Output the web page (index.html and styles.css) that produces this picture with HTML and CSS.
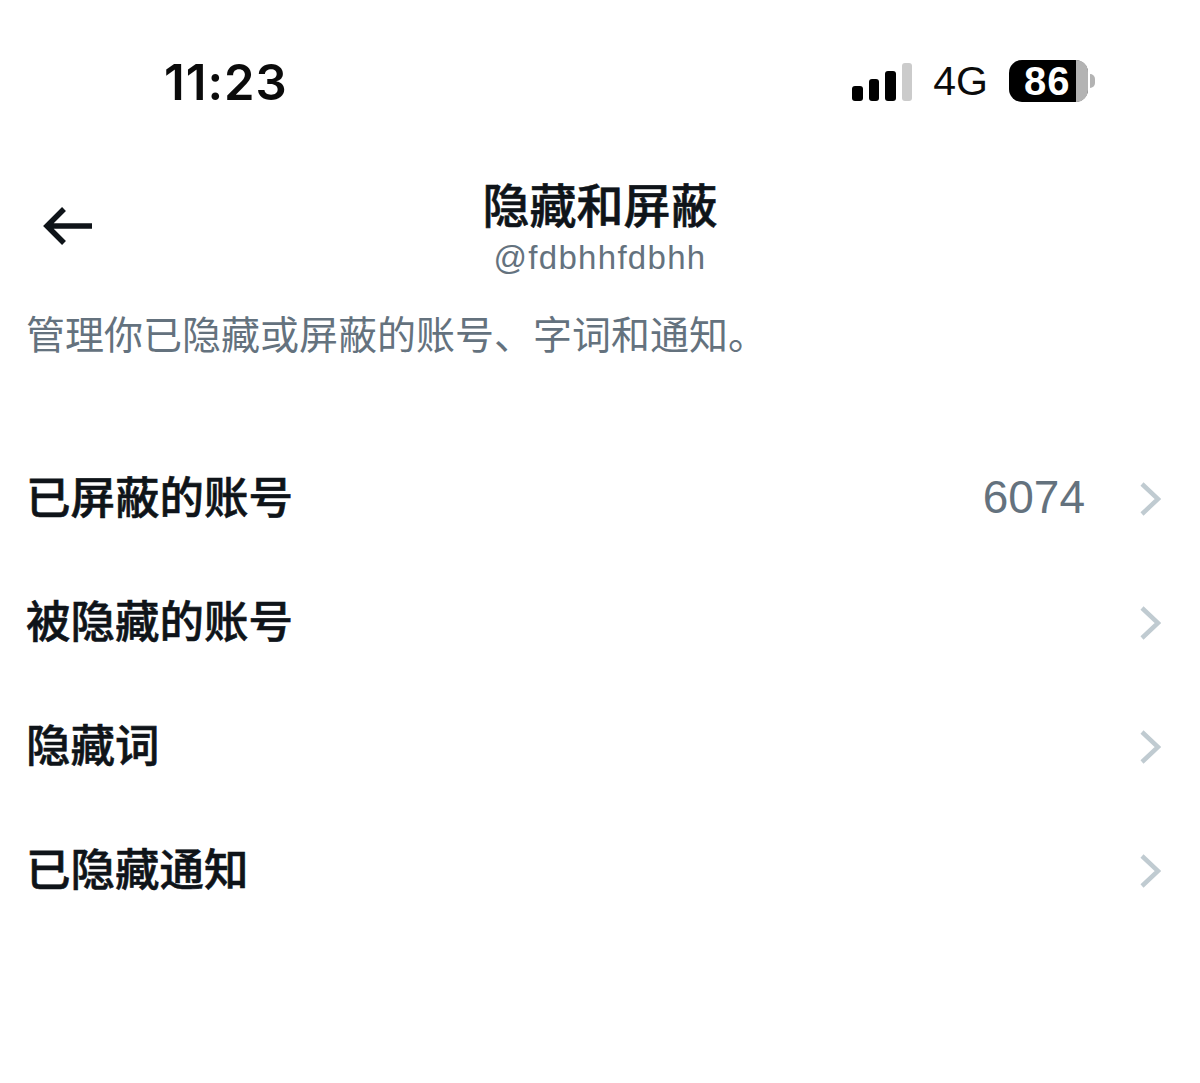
FILE: index.html
```html
<!DOCTYPE html>
<html lang="zh-CN">
<head>
	<meta charset="UTF-8">
	<title>隐藏和屏蔽</title>
	<link rel="stylesheet" href="styles.css">
</head>
<body>
	<div class="status">
		<div class="time">11:23</div>
		<div class="status-right">
			<div class="signal">
				<span class="bar b1"></span>
				<span class="bar b2"></span>
				<span class="bar b3"></span>
				<span class="bar b4"></span>
			</div>
			<div class="net">4G</div>
			<div class="battery">
				<div class="battery-body"><span class="battery-num">86</span><span class="battery-rest"></span></div>
				<span class="battery-cap"></span>
			</div>
		</div>
	</div>

	<header class="head">
		<svg class="back" width="52" height="44" viewBox="0 0 52 44"><path d="M50 22H5M22 5L5 22L22 39" fill="none" stroke="#0f1419" stroke-width="5.500"/></svg>
		<div class="title-box">
			<h1>隐藏和屏蔽</h1>
			<p class="handle">@fdbhhfdbhh</p>
		</div>
	</header>

	<p class="desc">管理你已隐藏或屏蔽的账号、字词和通知。</p>

	<ul class="list">
		<li class="row">
			<span class="label">已屏蔽的账号</span>
			<span class="count">6074</span>
			<svg class="chev" width="22" height="36" viewBox="0 0 22 36"><path d="M3 3L19 18L3 33" fill="none" stroke="#c0cbd1" stroke-width="4.500"/></svg>
		</li>
		<li class="row">
			<span class="label">被隐藏的账号</span>
			<svg class="chev" width="22" height="36" viewBox="0 0 22 36"><path d="M3 3L19 18L3 33" fill="none" stroke="#c0cbd1" stroke-width="4.500"/></svg>
		</li>
		<li class="row">
			<span class="label">隐藏词</span>
			<svg class="chev" width="22" height="36" viewBox="0 0 22 36"><path d="M3 3L19 18L3 33" fill="none" stroke="#c0cbd1" stroke-width="4.500"/></svg>
		</li>
		<li class="row">
			<span class="label">已隐藏通知</span>
			<svg class="chev" width="22" height="36" viewBox="0 0 22 36"><path d="M3 3L19 18L3 33" fill="none" stroke="#c0cbd1" stroke-width="4.500"/></svg>
		</li>
	</ul>
</body>
</html>
```

FILE: styles.css
```css
html, body{
	margin: 0;
	padding: 0;
}

body{
	width: 1200px;
	height: 1083px;
	overflow: hidden;
	background: #fff;
	color: #0f1419;
	font-family: "Liberation Sans", "Noto Sans CJK SC", sans-serif;
}

.status{
	height: 164px;
	display: flex;
	justify-content: space-between;
	align-items: flex-start;
	padding: 0 105px 0 164px;
	box-sizing: border-box;
}

.time{
	margin-top: 54px;
	font-family: Inter, sans-serif;
	font-size: 49px;
	line-height: 58px;
	font-weight: 600;
	letter-spacing: 1px;
	color: #0b0b0b;
}

.status-right{
	margin-top: 60px;
	display: flex;
	align-items: center;
	height: 42px;
}

.signal{
	display: flex;
	align-items: flex-end;
	gap: 6px;
	height: 40px;
	margin-right: 21px;
}

.bar{
	width: 10.500px;
	border-radius: 3px;
	background: #000;
}

.b1{ height: 15px; }
.b2{ height: 22px; }
.b3{ height: 30px; }
.b4{ height: 38px; background: #cbcbcb; }

.net{
	font-size: 41px;
	line-height: 42px;
	color: #0b0b0b;
	margin-right: 21px;
}

.battery{
	display: flex;
	align-items: center;
}

.battery-body{
	width: 79px;
	height: 42px;
	background: #000;
	border-radius: 13px;
	display: flex;
}

.battery-num{
	width: 67px;
	box-sizing: border-box;
	padding-left: 15px;
	color: #fff;
	font-size: 40px;
	font-weight: 700;
	line-height: 42px;
	letter-spacing: 1px;
	white-space: nowrap;
}

.battery-rest{
	flex: 1;
	background: #b3b3b3;
	border-radius: 0 13px 13px 0;
}

.battery-cap{
	width: 5px;
	height: 14px;
	margin-left: 2px;
	background: #b3b3b3;
	border-radius: 0 6px 6px 0;
}

.head{
	position: relative;
	height: 122px;
}

.back{
	position: absolute;
	left: 42px;
	top: 40px;
}

.title-box{
	text-align: center;
	padding-top: 14px;
}

h1{
	margin: 0;
	font-size: 47px;
	line-height: 49px;
	font-weight: 500;
	-webkit-text-stroke: 0.6px #0f1419;
	font-family: "Noto Sans CJK SC", sans-serif;
}

.handle{
	margin: 0;
	padding-top: 12px;
	font-size: 33px;
	line-height: 38px;
	letter-spacing: 1.300px;
	color: #64727e;
}

.desc{
	margin: 0;
	padding: 22px 0 0 26px;
	font-size: 39px;
	line-height: 48px;
	color: #64727e;
	font-family: "Noto Sans CJK SC", sans-serif;
}

.list{
	list-style: none;
	margin: 0;
	padding: 76px 0 0 0;
}

.row{
	height: 124px;
	display: flex;
	align-items: center;
	padding: 0 39px 0 26px;
}

.label{
	flex: 1;
	font-size: 44.500px;
	font-weight: 500;
	-webkit-text-stroke: 0.6px #0f1419;
	font-family: "Noto Sans CJK SC", sans-serif;
}

.count{
	font-size: 46px;
	color: #64727e;
	margin-right: 54px;
	position: relative;
	top: 3px;
}

.chev{
	position: relative;
	top: 5px;
}
```
